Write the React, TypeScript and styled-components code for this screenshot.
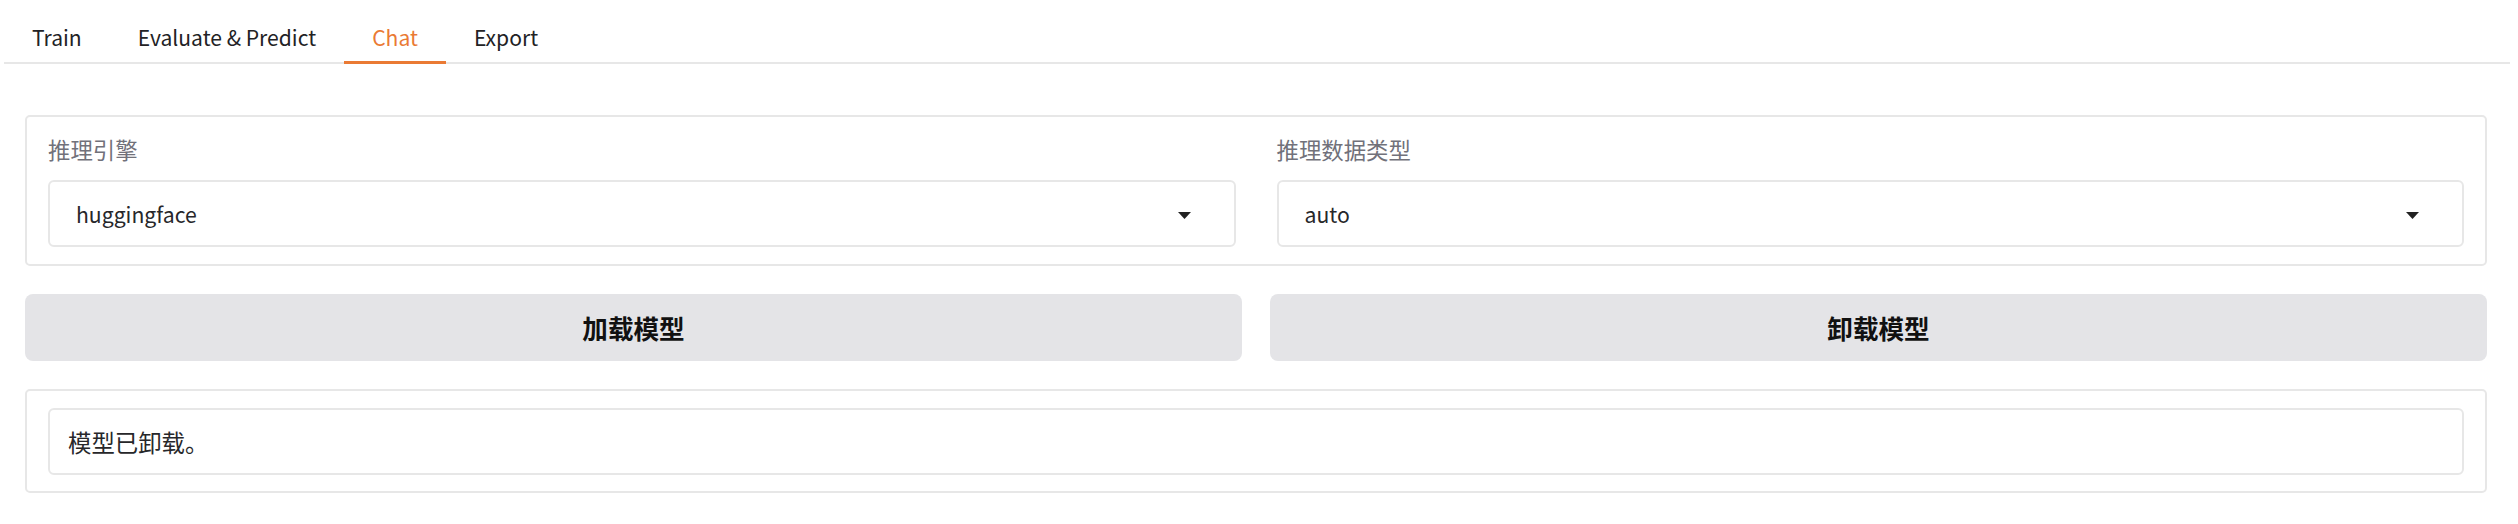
import React from 'react';
import styled, { createGlobalStyle } from 'styled-components';

const GlobalStyle = createGlobalStyle`
  html, body { margin: 0; padding: 0; background: #ffffff; }
  body {
    font-family: "Noto Sans CJK SC", "Noto Sans", sans-serif;
    color: #27272a;
  }
  * { box-sizing: border-box; }
`;

const Page = styled.div`
  padding: 0 8px 0 4px;
`;

const TabNav = styled.nav`
  display: flex;
  height: 64px;
  border-bottom: 2px solid #e7e7e7;
`;

const TabButton = styled.button<{ $active?: boolean }>`
  appearance: none;
  background: none;
  border: none;
  border-bottom: 3px solid ${(p) => (p.$active ? '#ea7a34' : 'transparent')};
  height: 64px;
  margin-bottom: -2px;
  padding: 20px 28px 0;
  display: flex;
  align-items: flex-start;
  font-family: inherit;
  font-size: 21.1px;
  line-height: 34px;
  color: ${(p) => (p.$active ? '#ea7a34' : '#222225')};
  cursor: pointer;
`;

const TabContent = styled.main`
  display: flex;
  flex-direction: column;
  gap: 28px;
  padding: 51px 23px 0 21px;
`;

const Panel = styled.section<{ $pt?: number; $pb?: number }>`
  border: 2px solid #e7e7e7;
  border-radius: 5px;
  padding: ${(p) => p.$pt ?? 16}px 21px ${(p) => p.$pb ?? 17}px;
`;

const FieldRow = styled.div`
  display: grid;
  grid-template-columns: 1fr 1fr;
  column-gap: 41px;
`;

const Field = styled.div`
  display: flex;
  flex-direction: column;
  gap: 15px;
`;

const Label = styled.span`
  font-size: 22.4px;
  line-height: 32px;
  color: #71717a;
`;

const Select = styled.div`
  height: 67px;
  border: 2px solid #e7e7e7;
  border-radius: 6px;
  display: flex;
  align-items: center;
  justify-content: space-between;
  padding: 0 43px 0 26px;
  font-size: 21.2px;
  color: #27272a;
`;

const Caret = styled.svg`
  width: 13px;
  height: 7px;
  margin-top: 3px;
  flex: none;
`;

const ButtonRow = styled.div`
  display: grid;
  grid-template-columns: 1fr 1fr;
  column-gap: 28px;
`;

const ActionButton = styled.button`
  appearance: none;
  border: none;
  height: 67px;
  border-radius: 8px;
  background: #e4e4e7;
  font-family: inherit;
  font-size: 25.6px;
  font-weight: 700;
  color: #111111;
  cursor: pointer;
`;

const TextBox = styled.div`
  height: 67px;
  border: 2px solid #e7e7e7;
  border-radius: 6px;
  display: flex;
  align-items: center;
  padding: 0 18px;
  font-size: 23.4px;
  color: #27272a;
`;

const tabs = ['Train', 'Evaluate & Predict', 'Chat', 'Export'];

function Dropdown({ label, value }: { label: string; value: string }) {
  return (
    <Field>
      <Label>{label}</Label>
      <Select>
        <span>{value}</span>
        <Caret viewBox="0 0 13 7">
          <polygon points="0,0 13,0 6.5,7" fill="#222222" />
        </Caret>
      </Select>
    </Field>
  );
}

export default function App() {
  return (
    <>
      <GlobalStyle />
      <Page>
        <TabNav>
          {tabs.map((t) => (
            <TabButton key={t} $active={t === 'Chat'}>
              {t}
            </TabButton>
          ))}
        </TabNav>
        <TabContent>
          <Panel>
            <FieldRow>
              <Dropdown label="推理引擎" value="huggingface" />
              <Dropdown label="推理数据类型" value="auto" />
            </FieldRow>
          </Panel>
          <ButtonRow>
            <ActionButton>加载模型</ActionButton>
            <ActionButton>卸载模型</ActionButton>
          </ButtonRow>
          <Panel $pt={17} $pb={16}>
            <TextBox>模型已卸载。</TextBox>
          </Panel>
        </TabContent>
      </Page>
    </>
  );
}
